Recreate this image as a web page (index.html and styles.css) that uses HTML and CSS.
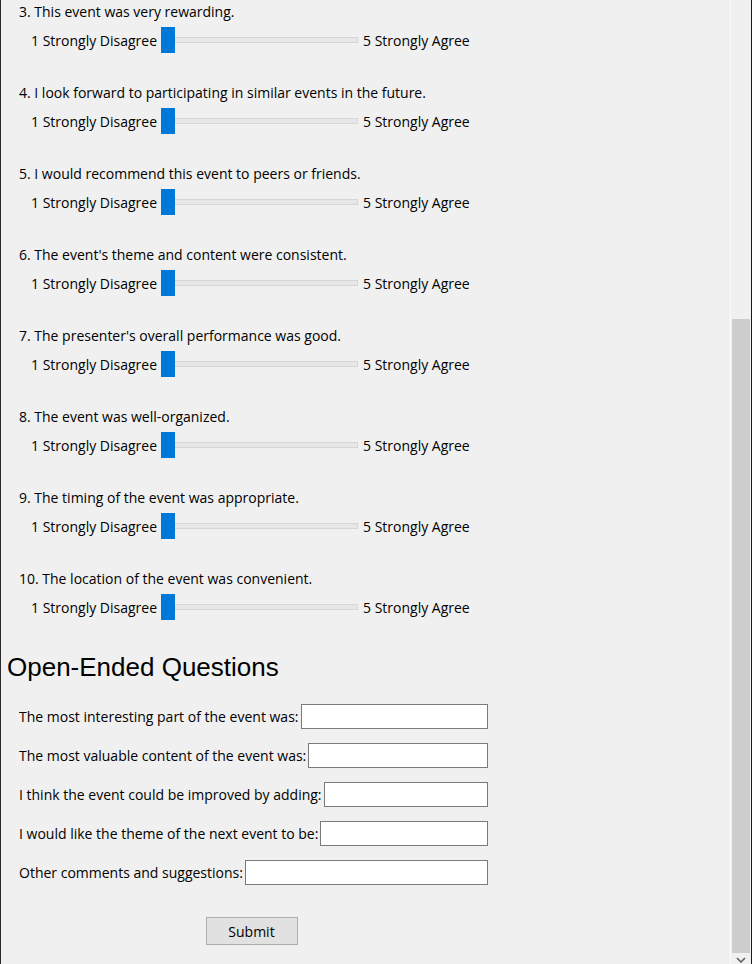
FILE: index.html
```html
<!DOCTYPE html>
<html>
<head>
<meta charset="utf-8">
<link rel="stylesheet" href="styles.css">
</head>
<body>
<div class="window">
  <main class="content">
    <div class="item"><div class="q">3. This event was very rewarding.</div><div class="scale"><span class="lo">1 Strongly Disagree</span><div class="slider"><div class="thumb"></div></div><span class="hi">5 Strongly Agree</span></div></div>
    <div class="item"><div class="q">4. I look forward to participating in similar events in the future.</div><div class="scale"><span class="lo">1 Strongly Disagree</span><div class="slider"><div class="thumb"></div></div><span class="hi">5 Strongly Agree</span></div></div>
    <div class="item"><div class="q">5. I would recommend this event to peers or friends.</div><div class="scale"><span class="lo">1 Strongly Disagree</span><div class="slider"><div class="thumb"></div></div><span class="hi">5 Strongly Agree</span></div></div>
    <div class="item"><div class="q">6. The event's theme and content were consistent.</div><div class="scale"><span class="lo">1 Strongly Disagree</span><div class="slider"><div class="thumb"></div></div><span class="hi">5 Strongly Agree</span></div></div>
    <div class="item"><div class="q">7. The presenter's overall performance was good.</div><div class="scale"><span class="lo">1 Strongly Disagree</span><div class="slider"><div class="thumb"></div></div><span class="hi">5 Strongly Agree</span></div></div>
    <div class="item"><div class="q">8. The event was well-organized.</div><div class="scale"><span class="lo">1 Strongly Disagree</span><div class="slider"><div class="thumb"></div></div><span class="hi">5 Strongly Agree</span></div></div>
    <div class="item"><div class="q">9. The timing of the event was appropriate.</div><div class="scale"><span class="lo">1 Strongly Disagree</span><div class="slider"><div class="thumb"></div></div><span class="hi">5 Strongly Agree</span></div></div>
    <div class="item"><div class="q">10. The location of the event was convenient.</div><div class="scale"><span class="lo">1 Strongly Disagree</span><div class="slider"><div class="thumb"></div></div><span class="hi">5 Strongly Agree</span></div></div>

    <h2 class="heading">Open-Ended Questions</h2>
    <div class="open">
      <label class="row"><span>The most interesting part of the event was:</span><input class="entry" type="text"></label>
      <label class="row"><span>The most valuable content of the event was:</span><input class="entry" type="text"></label>
      <label class="row"><span>I think the event could be improved by adding:</span><input class="entry" type="text"></label>
      <label class="row"><span>I would like the theme of the next event to be:</span><input class="entry" type="text"></label>
      <label class="row"><span>Other comments and suggestions:</span><input class="entry" type="text"></label>
    </div>
    <div class="actions"><button class="submit" type="button">Submit</button></div>
  </main>
  <aside class="scrollbar">
    <div class="thumb-v"></div>
    <svg class="arrow" width="10" height="6" viewBox="0 0 10 6"><path d="M1 1 L5 5 L9 1" fill="none" stroke="#606060" stroke-width="1.6"/></svg>
  </aside>
</div>
</body>
</html>
```

FILE: styles.css
```css
* { box-sizing: border-box; }
html, body { margin: 0; padding: 0; }
body {
  background: #f0f0f0;
  font-family: "Open Sans", "Noto Sans", sans-serif;
  font-size: 14px;
  color: #000;
  width: 752px;
  height: 964px;
  overflow: hidden;
}
.window {
  display: flex;
  height: 964px;
  border-left: 1px solid #2b2b2b;
  border-right: 1px solid #1a1a1a;
}
.content {
  flex: 1;
  padding: 4px 0 0 18px;
}
.item {
  height: 81px;
}
.q {
  line-height: 16px;
  height: 16px;
  white-space: nowrap;
}
.scale {
  display: flex;
  align-items: center;
  height: 26px;
  margin-top: 7px;
  padding-left: 12px;
  white-space: nowrap;
}
.lo { width: 127px; }
.slider {
  position: relative;
  width: 197px;
  height: 26px;
  margin-left: 3px;
  display: flex;
  align-items: center;
}
.slider::before {
  content: "";
  display: block;
  width: 100%;
  height: 4px;
  background: #e7e7e7;
  border: 1px solid #d6d6d6;
}
.thumb {
  position: absolute;
  left: 0;
  top: 0;
  width: 14px;
  height: 26px;
  background: #0078d7;
}
.hi { margin-left: 5px; }
.heading {
  margin: 0 0 0 -12px;
  font-family: "Liberation Sans", Arial, sans-serif;
  font-weight: normal;
  font-size: 26px;
  line-height: 30px;
  height: 30px;
}
.open {
  width: 469px;
  margin-top: 22px;
  display: flex;
  flex-direction: column;
  gap: 14px;
}
.row {
  display: flex;
  align-items: center;
  height: 25px;
  white-space: nowrap;
}
.row span { margin-right: 2px; }
.entry {
  flex: 1;
  min-width: 0;
  height: 25px;
  border: 1px solid #7a7a7a;
  background: #fff;
  margin: 0;
  padding: 0 3px;
  font: inherit;
}
.actions {
  width: 465px;
  display: flex;
  justify-content: center;
  margin-top: 32px;
}
.submit {
  width: 92px;
  height: 28px;
  background: #e1e1e1;
  border: 1px solid #adadad;
  font-family: "Open Sans", "Noto Sans", sans-serif;
  font-size: 14px;
  color: #000;
  padding: 0;
}
.scrollbar {
  width: 21px;
  border-left: 1px solid #fafafa;
  background: #f0f0f0;
  display: flex;
  flex-direction: column;
  align-items: center;
}
.thumb-v {
  width: 18px;
  height: 634px;
  margin-top: 319px;
  background: #cdcdcd;
}
.arrow {
  margin-top: 4px;
}
```
